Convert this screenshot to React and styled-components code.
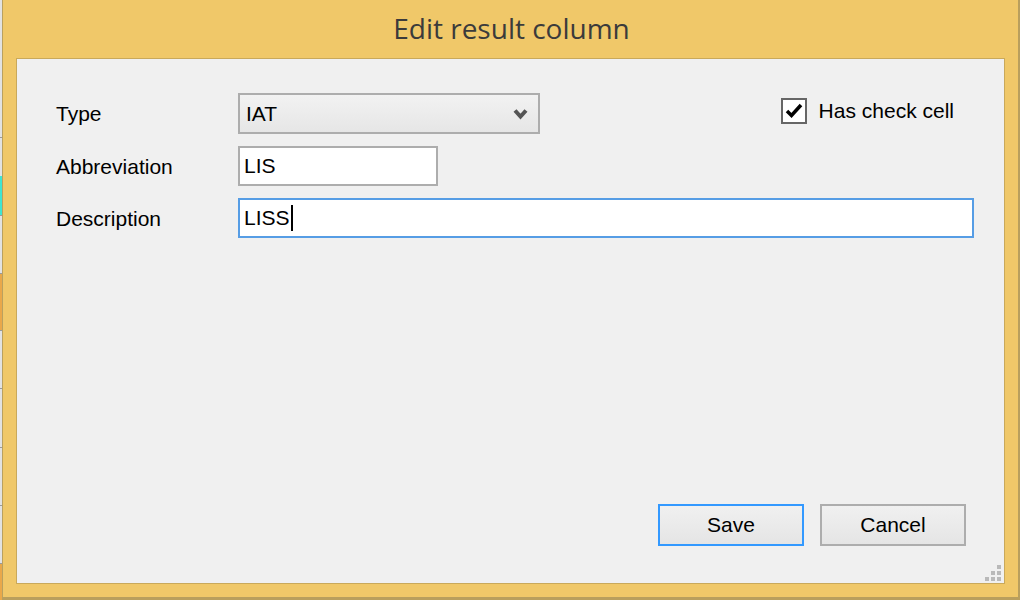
import styled, { createGlobalStyle } from 'styled-components'

const GlobalStyle = createGlobalStyle`
  html, body {
    margin: 0;
    padding: 0;
    background: #e6e6e6;
    overflow: hidden;
  }
  * {
    box-sizing: border-box;
  }
`

const Page = styled.div`
  display: flex;
  width: 1020px;
  height: 600px;
  font-family: "Liberation Sans", Arial, sans-serif;
`

const Strip = styled.div`
  display: flex;
  flex-direction: column;
  width: 2px;
  flex: none;
`

const StripPart = styled.div`
  flex: none;
  background: ${p => p.$color};
`

const Window = styled.div`
  flex: 1;
  display: flex;
  flex-direction: column;
  background: #f0c869;
  border-left: 1px solid #baa15f;
  border-right: 2px solid #b99f5d;
  border-bottom: 3px solid #b99f5d;
  padding: 0 13px 13px 13px;
`

const TitleBar = styled.div`
  height: 58px;
  flex: none;
  display: flex;
  align-items: center;
  justify-content: center;
  padding-bottom: 2px;
  padding-left: 2px;
  font-family: "Open Sans", "Noto Sans", sans-serif;
  font-size: 28px;
  letter-spacing: 0px;
  color: #3b3b3b;
`

const Client = styled.div`
  position: relative;
  flex: 1;
  display: flex;
  flex-direction: column;
  background: #f0f0f0;
  border: 1px solid #c9a95b;
  padding: 34px 30px 37px 39px;
`

const Form = styled.div`
  display: grid;
  grid-template-columns: 182px 1fr;
  grid-template-rows: 41px 40px 40px;
  row-gap: 12px;
  align-items: center;
`

const Label = styled.div`
  font-size: 21px;
  color: #000;
  padding-top: 1px;
`

const TopRow = styled.div`
  display: flex;
  align-items: flex-start;
  height: 41px;
`

const Combo = styled.div`
  display: flex;
  align-items: center;
  justify-content: space-between;
  width: 302px;
  height: 41px;
  padding: 0 10px 0 6px;
  border: 2px solid #adadad;
  background: linear-gradient(#f2f2f2, #e6e6e6);
  font-size: 21px;
  color: #000;
`

const TextBox = styled.div`
  display: flex;
  align-items: center;
  width: ${p => p.$width || '100%'};
  height: 40px;
  padding: 0 4px;
  border: 2px solid ${p => (p.$focused ? '#569de5' : '#adadad')};
  background: #fff;
  font-size: 21px;
  color: #000;
`

const Caret = styled.span`
  display: inline-block;
  width: 2px;
  height: 26px;
  margin-left: 1px;
  background: #000;
`

const CheckRow = styled.div`
  display: flex;
  align-items: center;
  gap: 12px;
  margin-left: auto;
  margin-top: 5px;
  margin-right: 20px;
  font-size: 21px;
  color: #000;
`

const CheckBox = styled.div`
  display: flex;
  align-items: center;
  justify-content: center;
  width: 26px;
  height: 26px;
  border: 2px solid #666;
  background: #fff;
`

const Footer = styled.div`
  display: flex;
  justify-content: flex-end;
  gap: 16px;
  margin-top: auto;
  margin-right: 8px;
`

const Button = styled.div`
  display: flex;
  align-items: center;
  justify-content: center;
  width: 146px;
  height: 42px;
  border: 2px solid ${p => (p.$primary ? '#3399ff' : '#adadad')};
  background: linear-gradient(#f0f0f0, #e5e5e5);
  font-size: 21px;
  color: #000;
`

const Grip = styled.svg`
  position: absolute;
  right: 3px;
  bottom: 2px;
`

const stripParts = [
  { h: 137, c: '#e2e2e2' },
  { h: 1, c: '#9a9a9a' },
  { h: 38, c: '#e2e2e2' },
  { h: 39, c: '#3ee6d2' },
  { h: 1, c: '#9a9a9a' },
  { h: 57, c: '#e2e2e2' },
  { h: 1, c: '#9a9a9a' },
  { h: 56, c: '#e9a84a' },
  { h: 1, c: '#9a9a9a' },
  { h: 57, c: '#e2e2e2' },
  { h: 1, c: '#9a9a9a' },
  { h: 58, c: '#e2e2e2' },
  { h: 1, c: '#9a9a9a' },
  { h: 57, c: '#e2e2e2' },
  { h: 1, c: '#9a9a9a' },
  { h: 57, c: '#e2e2e2' },
  { h: 1, c: '#9a9a9a' },
  { h: 40, c: '#e9a84a' },
]

const App = () => {
  return (
    <Page>
      <GlobalStyle />
      <Strip>
        {stripParts.map((s, i) => (
          <StripPart key={i} $color={s.c} style={{ height: s.h }} />
        ))}
      </Strip>
      <Window>
        <TitleBar>Edit result column</TitleBar>
        <Client>
          <Form>
            <Label>Type</Label>
            <TopRow>
              <Combo>
                <span>IAT</span>
                <svg width="15" height="12" viewBox="0 0 15 12">
                  <polyline points="2,2.5 7.5,8.5 13,2.5" fill="none" stroke="#555" strokeWidth="4" />
                </svg>
              </Combo>
              <CheckRow>
                <CheckBox>
                  <svg width="18" height="16" viewBox="0 0 18 16">
                    <polyline points="2,8 6.5,12.5 16,2" fill="none" stroke="#000" strokeWidth="3.5" />
                  </svg>
                </CheckBox>
                Has check cell
              </CheckRow>
            </TopRow>
            <Label>Abbreviation</Label>
            <TextBox $width="200px">LIS</TextBox>
            <Label>Description</Label>
            <TextBox $focused>
              LISS
              <Caret />
            </TextBox>
          </Form>
          <Footer>
            <Button $primary>Save</Button>
            <Button>Cancel</Button>
          </Footer>
          <Grip width="16" height="16" viewBox="0 0 16 16">
            <rect x="12" y="0" width="4" height="4" fill="#b9b9b9" />
            <rect x="6" y="6" width="4" height="4" fill="#b9b9b9" />
            <rect x="12" y="6" width="4" height="4" fill="#b9b9b9" />
            <rect x="0" y="12" width="4" height="4" fill="#b9b9b9" />
            <rect x="6" y="12" width="4" height="4" fill="#b9b9b9" />
            <rect x="12" y="12" width="4" height="4" fill="#b9b9b9" />
          </Grip>
        </Client>
      </Window>
    </Page>
  )
}

export default App
